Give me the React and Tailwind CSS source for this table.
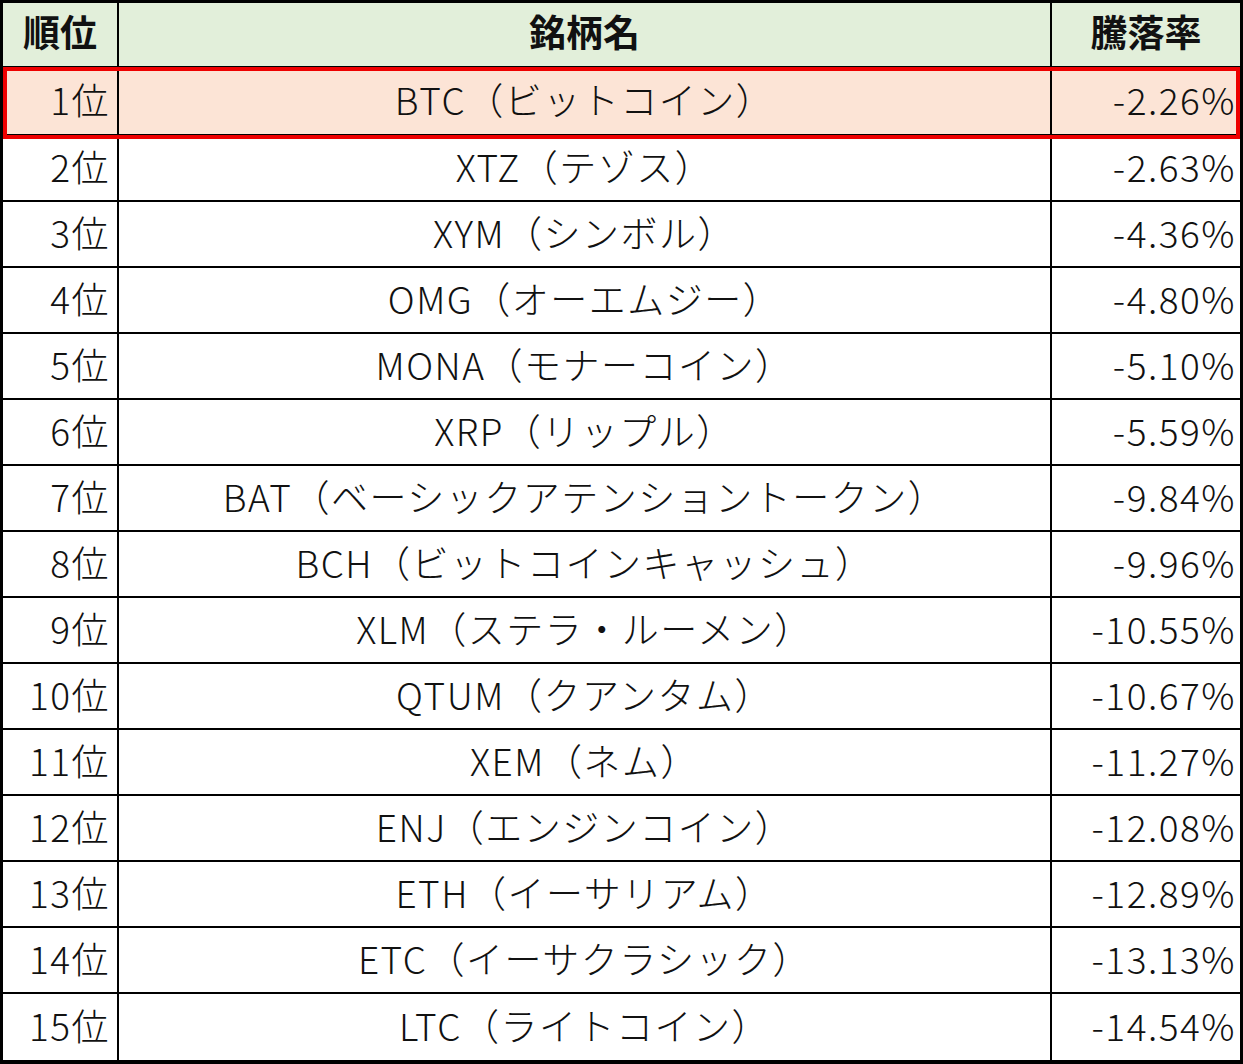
const rows = [
  ["1位", "BTC（ビットコイン）", "-2.26%"],
  ["2位", "XTZ（テゾス）", "-2.63%"],
  ["3位", "XYM（シンボル）", "-4.36%"],
  ["4位", "OMG（オーエムジー）", "-4.80%"],
  ["5位", "MONA（モナーコイン）", "-5.10%"],
  ["6位", "XRP（リップル）", "-5.59%"],
  ["7位", "BAT（ベーシックアテンショントークン）", "-9.84%"],
  ["8位", "BCH（ビットコインキャッシュ）", "-9.96%"],
  ["9位", "XLM（ステラ・ルーメン）", "-10.55%"],
  ["10位", "QTUM（クアンタム）", "-10.67%"],
  ["11位", "XEM（ネム）", "-11.27%"],
  ["12位", "ENJ（エンジンコイン）", "-12.08%"],
  ["13位", "ETH（イーサリアム）", "-12.89%"],
  ["14位", "ETC（イーサクラシック）", "-13.13%"],
  ["15位", "LTC（ライトコイン）", "-14.54%"],
];

function Row({ rank, name, rate, first, last }) {
  return (
    <div
      className={`flex ${first ? "relative h-[68px] bg-[#fce4d6]" : "h-[66px] bg-white"} ${
        last ? "" : "border-b-2 border-black"
      }`}
    >
      <div className="flex w-[116px] shrink-0 items-center justify-end border-r-2 border-black pr-[7px] pb-[3px]">
        {rank}
      </div>
      <div className="flex w-[933px] shrink-0 items-center justify-center border-r-2 border-black pb-[3px]">
        {name}
      </div>
      <div className="flex flex-1 items-center justify-end pr-[4px] pb-[3px]">{rate}</div>
      {first && (
        <div className="pointer-events-none absolute -top-[1px] -bottom-[5px] left-0 right-0 z-10 border-4 border-[#ee0000]" />
      )}
    </div>
  );
}

export default function App() {
  return (
    <div
      className="h-[1064px] w-[1243px] bg-white text-[37px] font-light leading-none tracking-[1.5px] text-[#111]"
      style={{ fontFamily: '"Noto Sans CJK JP", "Noto Sans", sans-serif' }}
    >
      <div className="flex h-full flex-col border-x-[3px] border-t-[3px] border-b-[4px] border-black">
        <div className="flex h-[65px] shrink-0 border-b-2 border-black bg-[#e2efda] font-bold tracking-normal">
          <div className="flex w-[116px] shrink-0 items-center justify-center border-r-2 border-black pb-[7px]">
            順位
          </div>
          <div className="flex w-[933px] shrink-0 items-center justify-center border-r-2 border-black pb-[7px]">
            銘柄名
          </div>
          <div className="flex flex-1 items-center justify-center pb-[7px]">騰落率</div>
        </div>
        {rows.map(([rank, name, rate], i) => (
          <Row
            key={rank}
            rank={rank}
            name={name}
            rate={rate}
            first={i === 0}
            last={i === rows.length - 1}
          />
        ))}
      </div>
    </div>
  );
}
